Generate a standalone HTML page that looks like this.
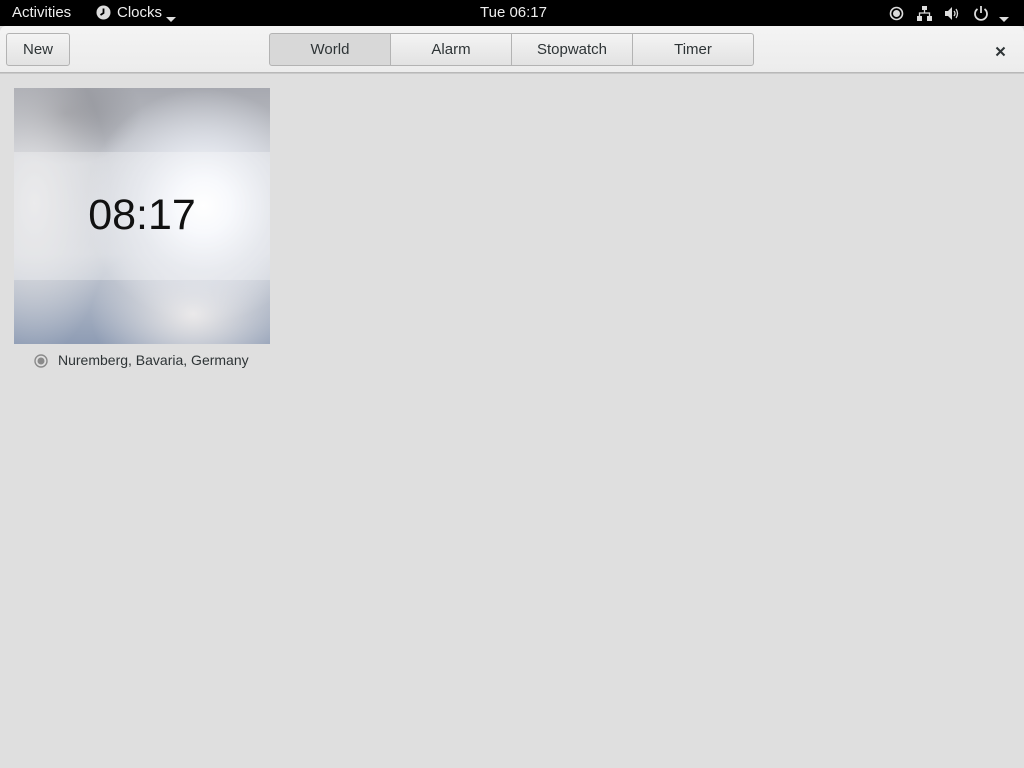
<!DOCTYPE html>
<html><head><style>
body{margin:0;width:1024px;height:768px;background:#dfdfdf;font-family:"Liberation Sans",sans-serif;overflow:hidden;position:relative}
#top{position:absolute;left:0;top:0;width:1024px;height:26px;background:#000;color:#eee;font-size:15px}
#top span{position:absolute;top:4px}
#hdr{position:absolute;left:0;top:26px;width:1024px;height:46px;background:linear-gradient(#f4f4f4,#ececec);border-radius:6px 6px 0 0;border-bottom:1px solid #b8b8b8;box-shadow:0 1px 0 #c9c9c9}
.btn{position:absolute;top:7px;height:33px;box-sizing:border-box;border:1px solid #b3b3b3;background:linear-gradient(#f4f4f4,#e2e2e2);font-size:15px;color:#2e3436;text-align:center;line-height:32px;border-radius:3px}
.tab{border-radius:0}
#tile{position:absolute;left:14px;top:88px;width:256px;height:256px;overflow:hidden;
background:radial-gradient(circle at 74% 46%,#fff 0,#f4f6fb 12%,rgba(225,228,235,0.85) 28%,rgba(0,0,0,0) 50%),
radial-gradient(ellipse 40% 30% at 70% 88%,#eceaea 0,rgba(0,0,0,0) 100%),
radial-gradient(ellipse 30% 60% at 8% 45%,#e2e2e4 0,rgba(0,0,0,0) 100%),
radial-gradient(ellipse 30% 20% at 20% 10%,#8f9096 0,rgba(0,0,0,0) 100%),
linear-gradient(#a7a9b0,#c4c7ce 30%,#c8ccd4 65%,#8e9cb4)}
#band{position:absolute;left:0;top:64px;width:256px;height:128px;background:rgba(255,255,255,0.3)}
#time{position:absolute;left:0;top:64px;width:256px;height:128px;line-height:126px;text-align:center;font-size:43px;color:#111}
</style></head><body>
<div id="top">
<span style="left:12px">Activities</span>
<span style="left:96px;top:5px"><svg width="15" height="15"><circle cx="7.5" cy="7.5" r="7" fill="#ddd"/><path d="M7.5 3.5V8L4.5 10" stroke="#000" stroke-width="1.8" fill="none"/></svg></span>
<span style="left:117px">Clocks</span>
<span style="left:166px;top:10px"><svg width="10" height="6"><path d="M0 0H10L5 5Z" fill="#ddd"/></svg></span>
<span style="left:480px">Tue 06:17</span>
<span style="left:889px;top:6px"><svg width="15" height="15"><circle cx="7.5" cy="7.5" r="6" stroke="#ddd" stroke-width="1.6" fill="none"/><circle cx="7.5" cy="7.5" r="3.5" fill="#ddd"/></svg></span>
<span style="left:917px;top:6px"><svg width="15" height="15"><rect x="5" y="0" width="5" height="4" fill="#ddd"/><rect x="0" y="10" width="5" height="5" fill="#ddd"/><rect x="10" y="10" width="5" height="5" fill="#ddd"/><path d="M7.5 4V7M2.5 10V7H12.5V10" stroke="#ddd" stroke-width="1.3" fill="none"/></svg></span>
<span style="left:944px;top:6px"><svg width="16" height="15"><path d="M1 5H4L8 1V14L4 10H1Z" fill="#ddd"/><path d="M10 5Q12 7.5 10 10M12 3Q15 7.5 12 12" stroke="#ddd" stroke-width="1.3" fill="none"/></svg></span>
<span style="left:973px;top:5px"><svg width="16" height="16"><path d="M4.5 4A6 6 0 1 0 11.5 4" stroke="#ddd" stroke-width="1.8" fill="none"/><path d="M8 1V8" stroke="#ddd" stroke-width="1.8"/></svg></span>
<span style="left:999px;top:10px"><svg width="10" height="6"><path d="M0 0H10L5 5Z" fill="#ddd"/></svg></span>
</div>
<div id="hdr">
<div class="btn" style="left:6px;width:64px">New</div>
<div class="btn tab" style="left:269px;width:122px;background:#d8d8d8;border-radius:3px 0 0 3px">World</div>
<div class="btn tab" style="left:390px;width:122px">Alarm</div>
<div class="btn tab" style="left:511px;width:122px">Stopwatch</div>
<div class="btn tab" style="left:632px;width:122px;border-radius:0 3px 3px 0">Timer</div>
<div style="position:absolute;left:995px;top:18px"><svg width="11" height="11"><path d="M1.5 1.5L9.5 9.5M9.5 1.5L1.5 9.5" stroke="#2e3436" stroke-width="2"/></svg></div>
</div>
<div id="tile"><div id="band"></div><div id="time">08:17</div></div>
<div style="position:absolute;left:34px;top:354px"><svg width="14" height="14"><circle cx="7" cy="7" r="6" stroke="#8a8a8a" stroke-width="1.4" fill="none"/><circle cx="7" cy="7" r="3.5" fill="#8a8a8a"/></svg></div>
<div style="position:absolute;left:58px;top:352px;font-size:14px;color:#2e3436">Nuremberg, Bavaria, Germany</div>
</body></html>
